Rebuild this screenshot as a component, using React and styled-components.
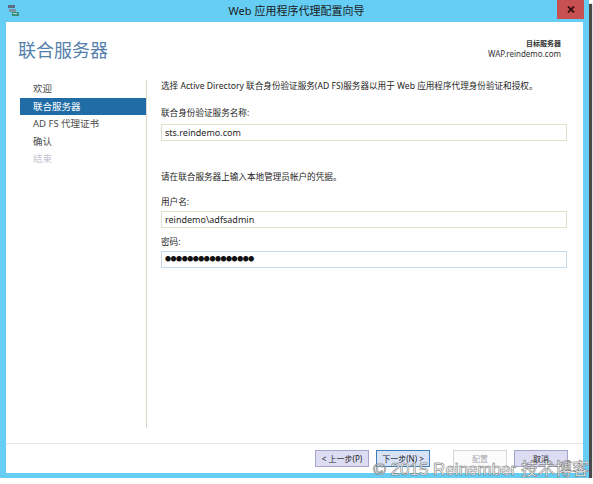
import React from 'react';
import styled, {createGlobalStyle} from 'styled-components';

const GlobalStyle = createGlobalStyle`
  html, body {
    margin: 0;
    padding: 0;
    background: #fff;
  }
  body {
    font-family: "Segoe UI", "Noto Sans", "Noto Sans CJK SC", sans-serif;
    color: #1e1e1e;
  }
`;

const steps = [
  {label: '欢迎'},
  {label: '联合服务器', active: true},
  {label: 'AD FS 代理证书'},
  {label: '确认'},
  {label: '结束', disabled: true}
];

const WizardIcon = () => (
  <svg width="14" height="14" viewBox="0 0 14 14">
    <rect x="1" y="1" width="7" height="3" fill="#5a6f86"/>
    <rect x="2" y="5" width="7" height="3" fill="#7f93a8"/>
    <rect x="5" y="8" width="7" height="4" fill="#3d8f7d"/>
    <rect x="6" y="9" width="4" height="1" fill="#a6e0cf"/>
  </svg>
);

const CloseGlyph = () => (
  <svg width="8" height="7" viewBox="0 0 8 7">
    <path d="M1 0.5 L7 6.5 M7 0.5 L1 6.5" stroke="#3a1010" strokeWidth="1.8"/>
  </svg>
);

export default function App() {
  return (
    <>
      <GlobalStyle/>
      <Frame>
        <TitleBar>
          <IconSlot><WizardIcon/></IconSlot>
          <WindowTitle>Web 应用程序代理配置向导</WindowTitle>
          <CloseButton><CloseGlyph/></CloseButton>
        </TitleBar>
        <Client>
          <Header>
            <PageTitle>联合服务器</PageTitle>
            <Target>
              <TargetLabel>目标服务器</TargetLabel>
              <TargetName>WAP.reindemo.com</TargetName>
            </Target>
          </Header>
          <Main>
            <Nav>
              {steps.map((s) => (
                <NavItem key={s.label} $active={s.active} $disabled={s.disabled}>{s.label}</NavItem>
              ))}
            </Nav>
            <Content>
              <Text>选择 Active Directory 联合身份验证服务(AD FS)服务器以用于 Web 应用程序代理身份验证和授权。</Text>
              <Label $top={15}>联合身份验证服务名称:</Label>
              <Field $top={5}>sts.reindemo.com</Field>
              <Text $top={30}>请在联合服务器上输入本地管理员帐户的凭据。</Text>
              <Label $top={13}>用户名:</Label>
              <Field $top={3}>reindemo\adfsadmin</Field>
              <Label $top={8}>密码:</Label>
              <Field $top={3} $focused>
                <Dots>●●●●●●●●●●●●●●●●</Dots>
              </Field>
            </Content>
          </Main>
          <Footer>
            <Button>&lt; 上一步(P)</Button>
            <Button $primary>下一步(N) &gt;</Button>
            <Button $disabled $gap={23}>配置</Button>
            <Button>取消</Button>
          </Footer>
        </Client>
        <Watermark>© 2015 Reinember 技术博客</Watermark>
      </Frame>
    </>
  );
}

const Frame = styled.div`
  position: relative;
  width: 589px;
  height: 478px;
  background: #66cef5;
  box-shadow: 3px 4px 1px #4a4a4a;
  display: flex;
  flex-direction: column;
`;

const TitleBar = styled.div`
  height: 22px;
  display: grid;
  grid-template-columns: 1fr auto 1fr;
  align-items: start;
`;

const IconSlot = styled.div`
  padding: 4px 0 0 7px;
  display: flex;
`;

const WindowTitle = styled.div`
  font-size: 11px;
  line-height: 22px;
  color: #1a1a1a;
  padding-left: 4px;
`;

const CloseButton = styled.div`
  justify-self: end;
  margin-right: 5px;
  width: 27px;
  height: 19px;
  background: #c75050;
  display: flex;
  align-items: center;
  justify-content: center;
`;

const Client = styled.div`
  flex: 1;
  margin: 0 6px 5px 6px;
  background: #fff;
  display: flex;
  flex-direction: column;
`;

const Header = styled.div`
  height: 58px;
  box-sizing: border-box;
  padding: 17px 22px 0 12px;
  display: flex;
  justify-content: space-between;
  align-items: flex-start;
`;

const PageTitle = styled.div`
  font-size: 18px;
  line-height: 22px;
  color: #5580ab;
`;

const Target = styled.div`
  display: flex;
  flex-direction: column;
  align-items: flex-end;
`;

const TargetLabel = styled.div`
  font-size: 7px;
  line-height: 10px;
  font-weight: bold;
  color: #333;
`;

const TargetName = styled.div`
  font-size: 8px;
  line-height: 10px;
  color: #333;
`;

const Main = styled.div`
  flex: 1;
  display: flex;
  padding-bottom: 15px;
`;

const Nav = styled.div`
  width: 126px;
  margin-left: 14px;
  border-right: 1px solid #dcd8c6;
  display: flex;
  flex-direction: column;
`;

const NavItem = styled.div`
  height: 17.5px;
  line-height: 17.5px;
  padding-left: 13px;
  font-size: 9.5px;
  background: ${(p) => (p.$active ? '#1f6ca6' : 'transparent')};
  color: ${(p) => (p.$active ? '#fff' : p.$disabled ? '#c4c6d2' : '#4a4a4a')};
`;

const Content = styled.div`
  flex: 1;
  padding: 0 16px 0 14px;
  display: flex;
  flex-direction: column;
`;

const Text = styled.div`
  margin-top: ${(p) => p.$top || 0}px;
  font-size: 8.6px;
  line-height: 12px;
  color: #1e1e1e;
  white-space: nowrap;
`;

const Label = styled(Text)``;

const Field = styled.div`
  margin-top: ${(p) => p.$top || 0}px;
  height: 17px;
  box-sizing: border-box;
  border: 1px solid ${(p) => (p.$focused ? '#c8d9ea' : '#e2dfcd')};
  padding: 0 3px;
  font-size: 9px;
  line-height: 15px;
  color: #1e1e1e;
  display: flex;
  align-items: center;
`;

const Dots = styled.span`
  font-size: 6px;
  letter-spacing: -0.45px;
  color: #111;
`;

const Footer = styled.div`
  height: 30px;
  box-sizing: border-box;
  border-top: 1px solid #e6e6ea;
  padding-right: 15px;
  display: flex;
  justify-content: flex-end;
  align-items: center;
  gap: 7px;
`;

const Button = styled.div`
  width: 54px;
  height: 17px;
  box-sizing: border-box;
  margin-left: ${(p) => (p.$gap ? p.$gap - 7 : 0)}px;
  border: 1px solid ${(p) => (p.$primary ? '#3c7fc0' : p.$disabled ? '#d6d6d6' : '#a4a4cc')};
  background: ${(p) => (p.$primary ? '#d8e2f6' : p.$disabled ? '#fbfbfb' : '#dddcf3')};
  color: ${(p) => (p.$disabled ? '#a8a8b0' : '#1e1e1e')};
  font-size: 8px;
  display: flex;
  align-items: center;
  justify-content: center;
  white-space: nowrap;
`;

const Watermark = styled.div`
  position: absolute;
  right: 0;
  bottom: -2px;
  font-family: "Liberation Sans", "Noto Sans CJK SC", sans-serif;
  font-size: 17px;
  line-height: 20px;
  color: #fff;
  -webkit-text-stroke: 0.4px #6a6a6a;
  text-shadow: 0 0 1px rgba(60, 60, 60, 0.6);
  white-space: nowrap;
  pointer-events: none;
`;
